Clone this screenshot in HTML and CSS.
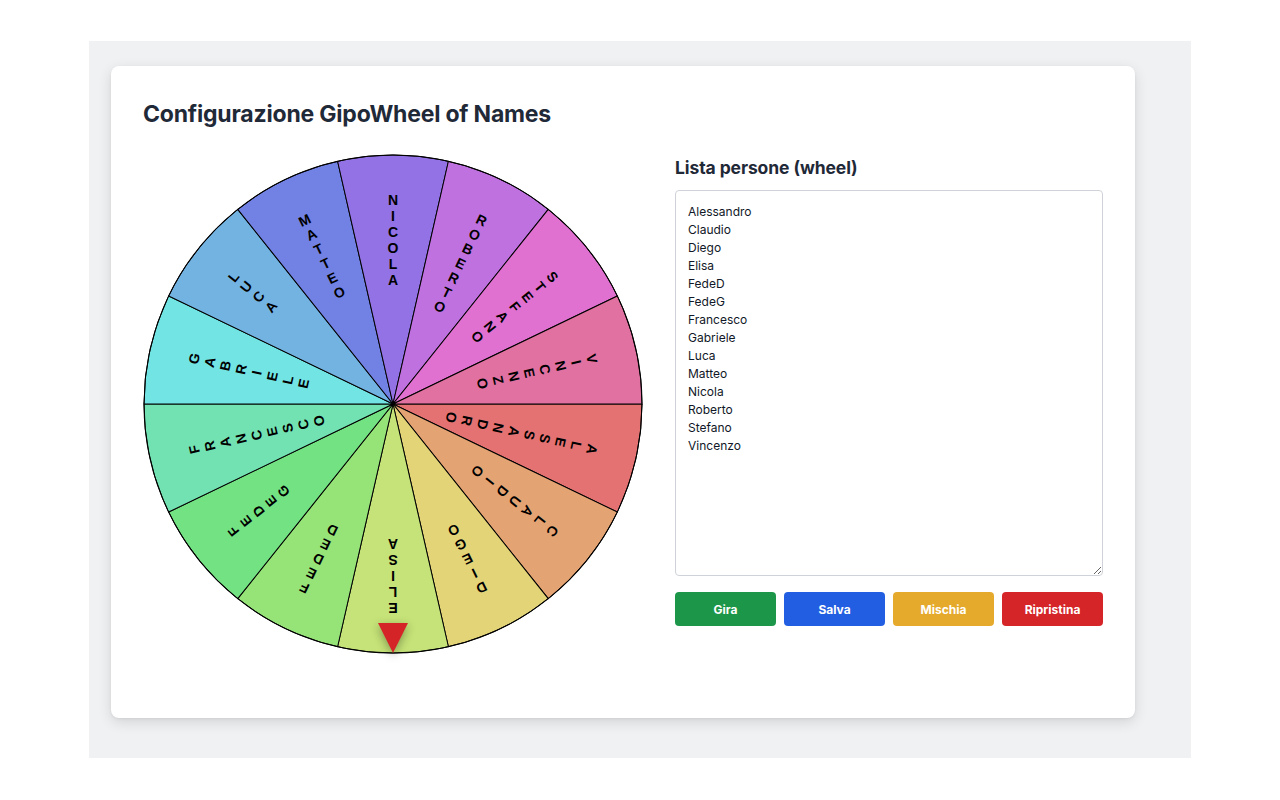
FILE: index.html
```html
<!DOCTYPE html>
<html lang="it">
<head>
<meta charset="utf-8">
<title>Configurazione GipoWheel of Names</title>
<link rel="stylesheet" href="styles.css">
</head>
<body>
<div class="page">
  <div class="card">
    <h1 class="title">Configurazione GipoWheel of Names</h1>
    <div class="layout">
      <div class="wheel-wrap">
        <svg class="wheel" viewBox="-250 -250 500 500" width="500" height="500">
          <g class="slices">
            <path d="M0 0 L249 0 A249 249 0 0 1 224.34 108.04 Z" fill="hsl(0,68%,67%)" transform="rotate(0)"/>
            <path d="M0 0 L249 0 A249 249 0 0 1 224.34 108.04 Z" fill="hsl(25.7,68%,67%)" transform="rotate(25.714)"/>
            <path d="M0 0 L249 0 A249 249 0 0 1 224.34 108.04 Z" fill="hsl(51.4,66%,68%)" transform="rotate(51.429)"/>
            <path d="M0 0 L249 0 A249 249 0 0 1 224.34 108.04 Z" fill="hsl(77.1,66%,68%)" transform="rotate(77.143)"/>
            <path d="M0 0 L249 0 A249 249 0 0 1 224.34 108.04 Z" fill="hsl(102.9,66%,68%)" transform="rotate(102.857)"/>
            <path d="M0 0 L249 0 A249 249 0 0 1 224.34 108.04 Z" fill="hsl(128.6,66%,67%)" transform="rotate(128.571)"/>
            <path d="M0 0 L249 0 A249 249 0 0 1 224.34 108.04 Z" fill="hsl(154.3,66%,67%)" transform="rotate(154.286)"/>
            <path d="M0 0 L249 0 A249 249 0 0 1 224.34 108.04 Z" fill="hsl(180,68%,67%)" transform="rotate(180)"/>
            <path d="M0 0 L249 0 A249 249 0 0 1 224.34 108.04 Z" fill="hsl(205.7,66%,67%)" transform="rotate(205.714)"/>
            <path d="M0 0 L249 0 A249 249 0 0 1 224.34 108.04 Z" fill="hsl(231.4,68%,67%)" transform="rotate(231.429)"/>
            <path d="M0 0 L249 0 A249 249 0 0 1 224.34 108.04 Z" fill="hsl(257.1,68%,67%)" transform="rotate(257.143)"/>
            <path d="M0 0 L249 0 A249 249 0 0 1 224.34 108.04 Z" fill="hsl(282.9,64%,66%)" transform="rotate(282.857)"/>
            <path d="M0 0 L249 0 A249 249 0 0 1 224.34 108.04 Z" fill="hsl(308.6,64%,66%)" transform="rotate(308.571)"/>
            <path d="M0 0 L249 0 A249 249 0 0 1 224.34 108.04 Z" fill="hsl(334.3,64%,66%)" transform="rotate(334.286)"/>
          </g>
          <g class="labels">
            <text transform="rotate(102.857)"><tspan x="0" y="-199">A</tspan><tspan x="0" dy="16">L</tspan><tspan x="0" dy="16">E</tspan><tspan x="0" dy="16">S</tspan><tspan x="0" dy="16">S</tspan><tspan x="0" dy="16">A</tspan><tspan x="0" dy="16">N</tspan><tspan x="0" dy="16">D</tspan><tspan x="0" dy="16">R</tspan><tspan x="0" dy="16">O</tspan></text>
            <text transform="rotate(128.571)"><tspan x="0" y="-199">C</tspan><tspan x="0" dy="16">L</tspan><tspan x="0" dy="16">A</tspan><tspan x="0" dy="16">U</tspan><tspan x="0" dy="16">D</tspan><tspan x="0" dy="16">I</tspan><tspan x="0" dy="16">O</tspan></text>
            <text transform="rotate(154.286)"><tspan x="0" y="-199">D</tspan><tspan x="0" dy="16">I</tspan><tspan x="0" dy="16">E</tspan><tspan x="0" dy="16">G</tspan><tspan x="0" dy="16">O</tspan></text>
            <text transform="rotate(180)"><tspan x="0" y="-199">E</tspan><tspan x="0" dy="16">L</tspan><tspan x="0" dy="16">I</tspan><tspan x="0" dy="16">S</tspan><tspan x="0" dy="16">A</tspan></text>
            <text transform="rotate(205.714)"><tspan x="0" y="-199">F</tspan><tspan x="0" dy="16">E</tspan><tspan x="0" dy="16">D</tspan><tspan x="0" dy="16">E</tspan><tspan x="0" dy="16">D</tspan></text>
            <text transform="rotate(231.429)"><tspan x="0" y="-199">F</tspan><tspan x="0" dy="16">E</tspan><tspan x="0" dy="16">D</tspan><tspan x="0" dy="16">E</tspan><tspan x="0" dy="16">G</tspan></text>
            <text transform="rotate(257.143)"><tspan x="0" y="-199">F</tspan><tspan x="0" dy="16">R</tspan><tspan x="0" dy="16">A</tspan><tspan x="0" dy="16">N</tspan><tspan x="0" dy="16">C</tspan><tspan x="0" dy="16">E</tspan><tspan x="0" dy="16">S</tspan><tspan x="0" dy="16">C</tspan><tspan x="0" dy="16">O</tspan></text>
            <text transform="rotate(282.857)"><tspan x="0" y="-199">G</tspan><tspan x="0" dy="16">A</tspan><tspan x="0" dy="16">B</tspan><tspan x="0" dy="16">R</tspan><tspan x="0" dy="16">I</tspan><tspan x="0" dy="16">E</tspan><tspan x="0" dy="16">L</tspan><tspan x="0" dy="16">E</tspan></text>
            <text transform="rotate(308.571)"><tspan x="0" y="-199">L</tspan><tspan x="0" dy="16">U</tspan><tspan x="0" dy="16">C</tspan><tspan x="0" dy="16">A</tspan></text>
            <text transform="rotate(334.286)"><tspan x="0" y="-199">M</tspan><tspan x="0" dy="16">A</tspan><tspan x="0" dy="16">T</tspan><tspan x="0" dy="16">T</tspan><tspan x="0" dy="16">E</tspan><tspan x="0" dy="16">O</tspan></text>
            <text transform="rotate(0)"><tspan x="0" y="-199">N</tspan><tspan x="0" dy="16">I</tspan><tspan x="0" dy="16">C</tspan><tspan x="0" dy="16">O</tspan><tspan x="0" dy="16">L</tspan><tspan x="0" dy="16">A</tspan></text>
            <text transform="rotate(25.714)"><tspan x="0" y="-199">R</tspan><tspan x="0" dy="16">O</tspan><tspan x="0" dy="16">B</tspan><tspan x="0" dy="16">E</tspan><tspan x="0" dy="16">R</tspan><tspan x="0" dy="16">T</tspan><tspan x="0" dy="16">O</tspan></text>
            <text transform="rotate(51.429)"><tspan x="0" y="-199">S</tspan><tspan x="0" dy="16">T</tspan><tspan x="0" dy="16">E</tspan><tspan x="0" dy="16">F</tspan><tspan x="0" dy="16">A</tspan><tspan x="0" dy="16">N</tspan><tspan x="0" dy="16">O</tspan></text>
            <text transform="rotate(77.143)"><tspan x="0" y="-199">V</tspan><tspan x="0" dy="16">I</tspan><tspan x="0" dy="16">N</tspan><tspan x="0" dy="16">C</tspan><tspan x="0" dy="16">E</tspan><tspan x="0" dy="16">N</tspan><tspan x="0" dy="16">Z</tspan><tspan x="0" dy="16">O</tspan></text>
          </g>
          <circle class="rim" cx="0" cy="0" r="249"/>
        </svg>
        <div class="pointer"></div>
      </div>
      <div class="panel">
        <h2 class="panel-title">Lista persone (wheel)</h2>
        <textarea class="names" spellcheck="false">Alessandro
Claudio
Diego
Elisa
FedeD
FedeG
Francesco
Gabriele
Luca
Matteo
Nicola
Roberto
Stefano
Vincenzo</textarea>
        <div class="actions">
          <button class="btn btn-green">Gira</button>
          <button class="btn btn-blue">Salva</button>
          <button class="btn btn-yellow">Mischia</button>
          <button class="btn btn-red">Ripristina</button>
        </div>
      </div>
    </div>
  </div>
</div>
</body>
</html>
```

FILE: styles.css
```css
* { box-sizing: border-box; }

html, body {
  margin: 0;
  padding: 0;
  background: #ffffff;
  font-family: Inter, "Noto Sans", "Liberation Sans", sans-serif;
  color: #1f2937;
}

.page {
  margin: 41px 0 0 89px;
  width: 1102px;
  height: 717px;
  background: #f0f1f3;
  padding: 25px 0 0 22px;
}

.card {
  width: 1024px;
  height: 652px;
  background: #ffffff;
  border-radius: 8px;
  box-shadow: 0 4px 14px rgba(0, 0, 0, 0.12), 0 1px 3px rgba(0, 0, 0, 0.06);
  padding: 32px;
}

.title {
  margin: 0 0 24px 0;
  font-size: 23px;
  line-height: 32px;
  font-weight: 700;
  color: #1f2937;
  letter-spacing: -0.2px;
}

.layout {
  display: flex;
  gap: 32px;
}

.wheel-wrap {
  position: relative;
  width: 500px;
  height: 500px;
  flex: none;
}

.wheel {
  display: block;
}

.slices path {
  stroke: #000;
  stroke-width: 1;
  stroke-linejoin: round;
}

.rim {
  fill: none;
  stroke: #000;
  stroke-width: 1;
}

.labels text {
  font-family: "Liberation Sans", Arial, sans-serif;
  font-weight: 700;
  font-size: 14px;
  fill: #000;
  text-anchor: middle;
}

.pointer {
  position: absolute;
  left: 235px;
  top: 469px;
  width: 0;
  height: 0;
  border-left: 15px solid transparent;
  border-right: 15px solid transparent;
  border-top: 30px solid #d42428;
  filter: drop-shadow(0 3px 5px rgba(0, 0, 0, 0.35));
}

.panel {
  width: 428px;
  display: flex;
  flex-direction: column;
}

.panel-title {
  margin: 0 0 8px 0;
  font-size: 17.5px;
  line-height: 28px;
  font-weight: 700;
  color: #1f2937;
  letter-spacing: -0.1px;
}

.names {
  display: block;
  width: 428px;
  height: 386px;
  border: 1px solid #cfd3d9;
  border-radius: 4px;
  padding: 12px;
  font-family: Inter, "Noto Sans", "Liberation Sans", sans-serif;
  font-size: 12px;
  line-height: 18px;
  color: #111827;
  background: #fff;
  resize: vertical;
  outline: none;
}

.actions {
  display: grid;
  grid-template-columns: repeat(4, 1fr);
  gap: 8px;
  margin-top: 16px;
}

.btn {
  height: 34px;
  border: none;
  border-radius: 4px;
  color: #ffffff;
  font-family: Inter, "Noto Sans", "Liberation Sans", sans-serif;
  font-size: 12px;
  font-weight: 700;
  cursor: pointer;
}

.btn-green { background: #1c974a; }
.btn-blue { background: #225ee1; }
.btn-yellow { background: #e5aa2c; }
.btn-red { background: #d52528; }
```
